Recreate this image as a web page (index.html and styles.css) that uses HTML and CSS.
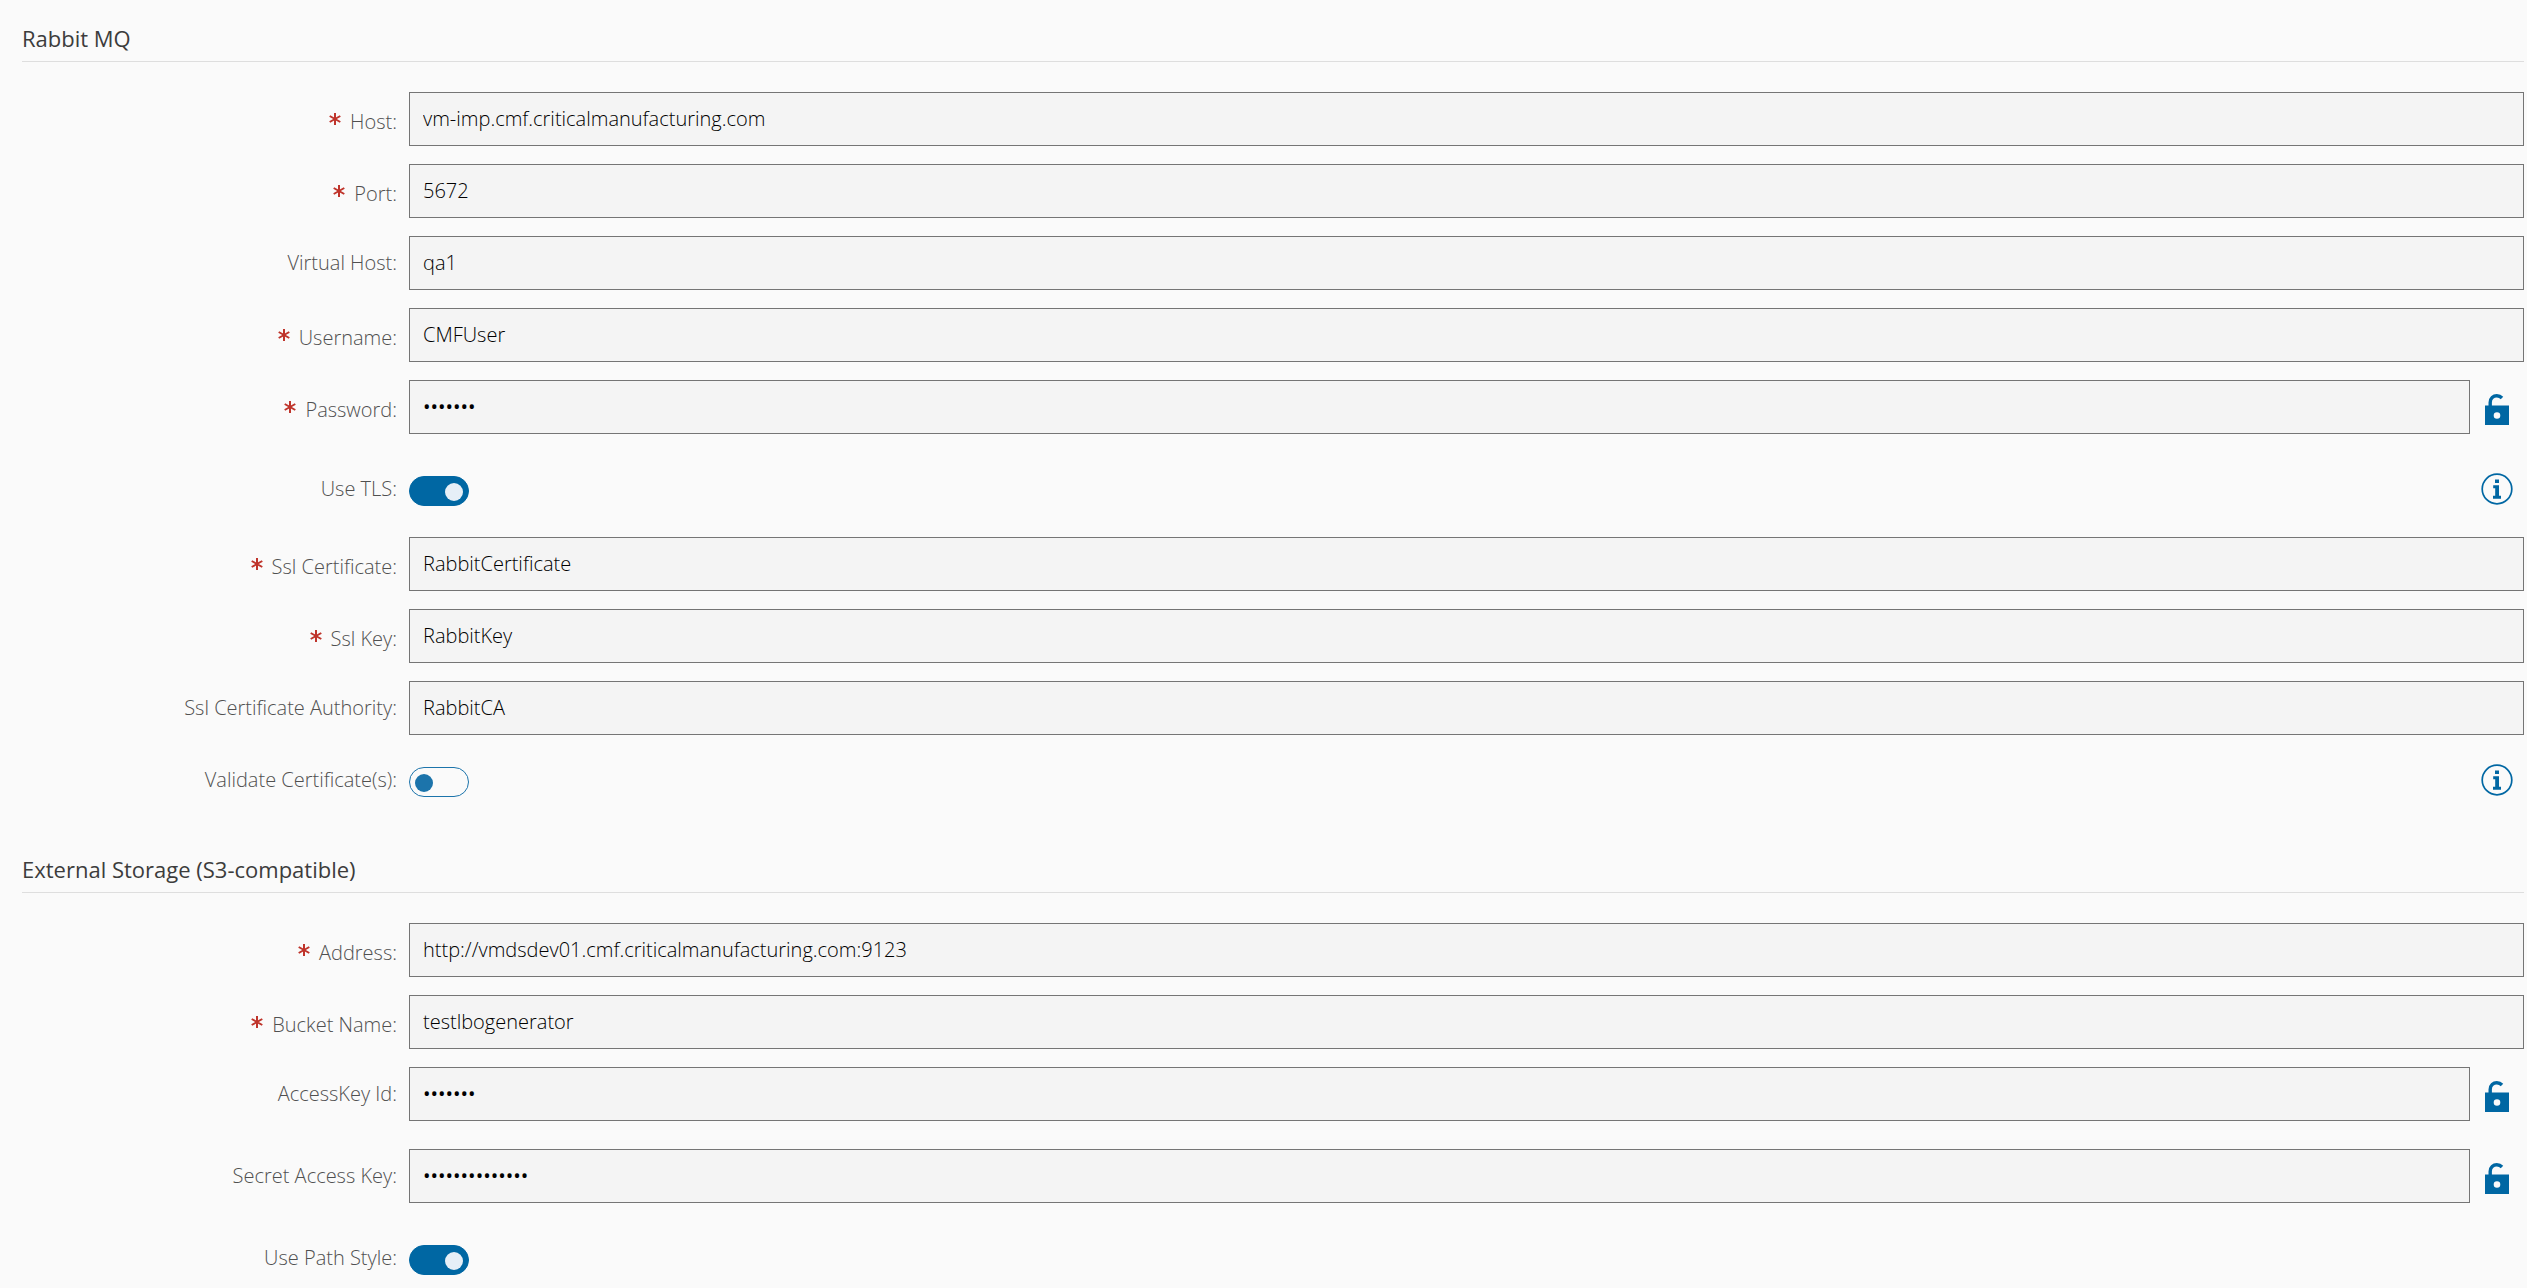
FILE: index.html
```html
<!DOCTYPE html>
<html lang="en">
<head>
<meta charset="utf-8">
<meta name="viewport" content="width=device-width, initial-scale=1">
<title>Settings</title>
<link rel="stylesheet" href="styles.css">
</head>
<body>
<svg class="sprite" aria-hidden="true">
  <symbol id="required" viewBox="0 0 12 12">
    <path d="M6 0v12M.7 3l10.600 6M.7 9l10.600-6" fill="none" stroke="currentColor" stroke-width="2"/>
  </symbol>
  <symbol id="unlock" viewBox="0 0 24 31">
    <path d="M5.200 12.500V8.500C5.200 4.300 8.300 1.800 11.800 1.800c2.300 0 4 .9 5.200 2.200" fill="none" stroke="currentColor" stroke-width="3.400"/>
    <path fill="currentColor" fill-rule="evenodd" d="M0 11.500h24V31H0zM12 18.200a3.300 3.300 0 1 0 0 6.600 3.300 3.300 0 0 0 0-6.600z"/>
  </symbol>
  <symbol id="info" viewBox="0 0 32 32">
    <circle cx="16" cy="16" r="14.800" fill="none" stroke="currentColor" stroke-width="1.700"/>
    <path fill="currentColor" d="M14 6.500h4v3.600h-4zM12.200 12.300H18v10.400h2v3h-8v-3h2.200v-7.400h-2z"/>
  </symbol>
</svg>
<main class="settings">
  <form>
    <section class="group" aria-labelledby="rabbit">
      <h2 class="group-title" id="rabbit">Rabbit MQ</h2>
      <div class="rows">
        <div class="row">
          <label class="label is-required" for="host"><svg class="required"><use href="#required"/></svg>Host:</label>
          <input class="field" id="host" type="text" value="vm-imp.cmf.criticalmanufacturing.com">
        </div>
        <div class="row">
          <label class="label is-required" for="port"><svg class="required"><use href="#required"/></svg>Port:</label>
          <input class="field" id="port" type="text" value="5672">
        </div>
        <div class="row">
          <label class="label" for="vhost">Virtual Host:</label>
          <input class="field" id="vhost" type="text" value="qa1">
        </div>
        <div class="row">
          <label class="label is-required" for="user"><svg class="required"><use href="#required"/></svg>Username:</label>
          <input class="field" id="user" type="text" value="CMFUser">
        </div>
        <div class="row row-secret">
          <label class="label is-required" for="pass"><svg class="required"><use href="#required"/></svg>Password:</label>
          <input class="field" id="pass" type="password" value="secret1">
          <button class="action" type="button" aria-label="Unlock password"><svg class="unlock"><use href="#unlock"/></svg></button>
        </div>
        <div class="row row-switch">
          <label class="label" for="tls">Use TLS:</label>
          <input class="switch" id="tls" type="checkbox" checked>
          <button class="action" type="button" aria-label="About TLS"><svg class="info"><use href="#info"/></svg></button>
        </div>
        <div class="row">
          <label class="label is-required" for="cert"><svg class="required"><use href="#required"/></svg>Ssl Certificate:</label>
          <input class="field" id="cert" type="text" value="RabbitCertificate">
        </div>
        <div class="row">
          <label class="label is-required" for="key"><svg class="required"><use href="#required"/></svg>Ssl Key:</label>
          <input class="field" id="key" type="text" value="RabbitKey">
        </div>
        <div class="row">
          <label class="label" for="ca">Ssl Certificate Authority:</label>
          <input class="field" id="ca" type="text" value="RabbitCA">
        </div>
        <div class="row row-switch">
          <label class="label" for="validate">Validate Certificate(s):</label>
          <input class="switch" id="validate" type="checkbox">
          <button class="action" type="button" aria-label="About certificate validation"><svg class="info"><use href="#info"/></svg></button>
        </div>
      </div>
    </section>
    <section class="group" aria-labelledby="storage">
      <h2 class="group-title" id="storage">External Storage (S3-compatible)</h2>
      <div class="rows">
        <div class="row">
          <label class="label is-required" for="address"><svg class="required"><use href="#required"/></svg>Address:</label>
          <input class="field" id="address" type="text" value="http://vmdsdev01.cmf.criticalmanufacturing.com:9123">
        </div>
        <div class="row">
          <label class="label is-required" for="bucket"><svg class="required"><use href="#required"/></svg>Bucket Name:</label>
          <input class="field" id="bucket" type="text" value="testlbogenerator">
        </div>
        <div class="row row-secret">
          <label class="label" for="access">AccessKey Id:</label>
          <input class="field" id="access" type="password" value="access1">
          <button class="action" type="button" aria-label="Unlock access key id"><svg class="unlock"><use href="#unlock"/></svg></button>
        </div>
        <div class="row row-secret">
          <label class="label" for="secret">Secret Access Key:</label>
          <input class="field" id="secret" type="password" value="secretaccess12">
          <button class="action" type="button" aria-label="Unlock secret access key"><svg class="unlock"><use href="#unlock"/></svg></button>
        </div>
        <div class="row row-switch">
          <label class="label" for="path">Use Path Style:</label>
          <input class="switch" id="path" type="checkbox" checked>
        </div>
      </div>
    </section>
  </form>
</main>
</body>
</html>
```
FILE: styles.css
```css
* {
  box-sizing: border-box;
}

body {
  margin: 0;
  background: #fafafa;
  color: #000;
  font-family: "Open Sans", "Noto Sans", sans-serif;
  font-size: 20px;
  font-weight: 300;
  line-height: 28px;
}

.sprite {
  display: none;
}

.settings {
  padding: 0 3px 0 22px;
}

.group {
  padding-top: 24px;
}

.group + .group {
  padding-top: 45px;
}

.group-title {
  margin: 0 0 30px;
  padding-bottom: 9px;
  border-bottom: 1px solid #dedede;
  color: #3c3c3c;
  font-size: 22px;
  font-weight: 400;
  line-height: 28px;
}

.rows {
  display: flex;
  flex-direction: column;
  gap: 18px;
}

.row {
  display: flex;
  align-items: flex-start;
}

.row-secret {
  padding-bottom: 10px;
}

.row-switch {
  height: 57px;
}

.label {
  flex: none;
  display: flex;
  justify-content: flex-end;
  width: 387px;
  padding: 13px 12px 0 0;
  color: #505050;
}

.label.is-required {
  padding-top: 16px;
}

.required {
  width: 12px;
  height: 12px;
  margin: 5px 9px 0 0;
  color: #bf342b;
}

.field {
  flex: 1;
  min-width: 0;
  height: 54px;
  margin: 0;
  padding: 0 13px 2px;
  border: 1px solid #757575;
  border-radius: 0;
  background: #f4f4f4;
  color: inherit;
  font: inherit;
}

.field[type="password"] {
  font-weight: 400;
}

.action {
  display: flex;
  justify-content: center;
  width: 54px;
  margin: 0 0 0 auto;
  padding: 11px 0 0;
  border: 0;
  background: none;
  color: #0067a3;
}

.row-secret .action {
  padding-top: 14px;
}

.unlock {
  width: 24px;
  height: 31px;
}

.info {
  width: 32px;
  height: 32px;
}

.switch {
  appearance: none;
  width: 60px;
  height: 30px;
  margin: 14px 0 0;
  padding: 6px 5px;
  border: 1px solid #1c74ab;
  border-radius: 15px;
}

.switch::before {
  content: "";
  display: block;
  width: 18px;
  height: 18px;
  border-radius: 50%;
  background: #1c74ab;
}

.switch:checked {
  border-color: #0067a3;
  background: #0067a3;
}

.switch:checked::before {
  margin-left: auto;
  background: #e6eff7;
}

@media (max-width: 900px) {
  .label {
    width: 200px;
  }
}
```
